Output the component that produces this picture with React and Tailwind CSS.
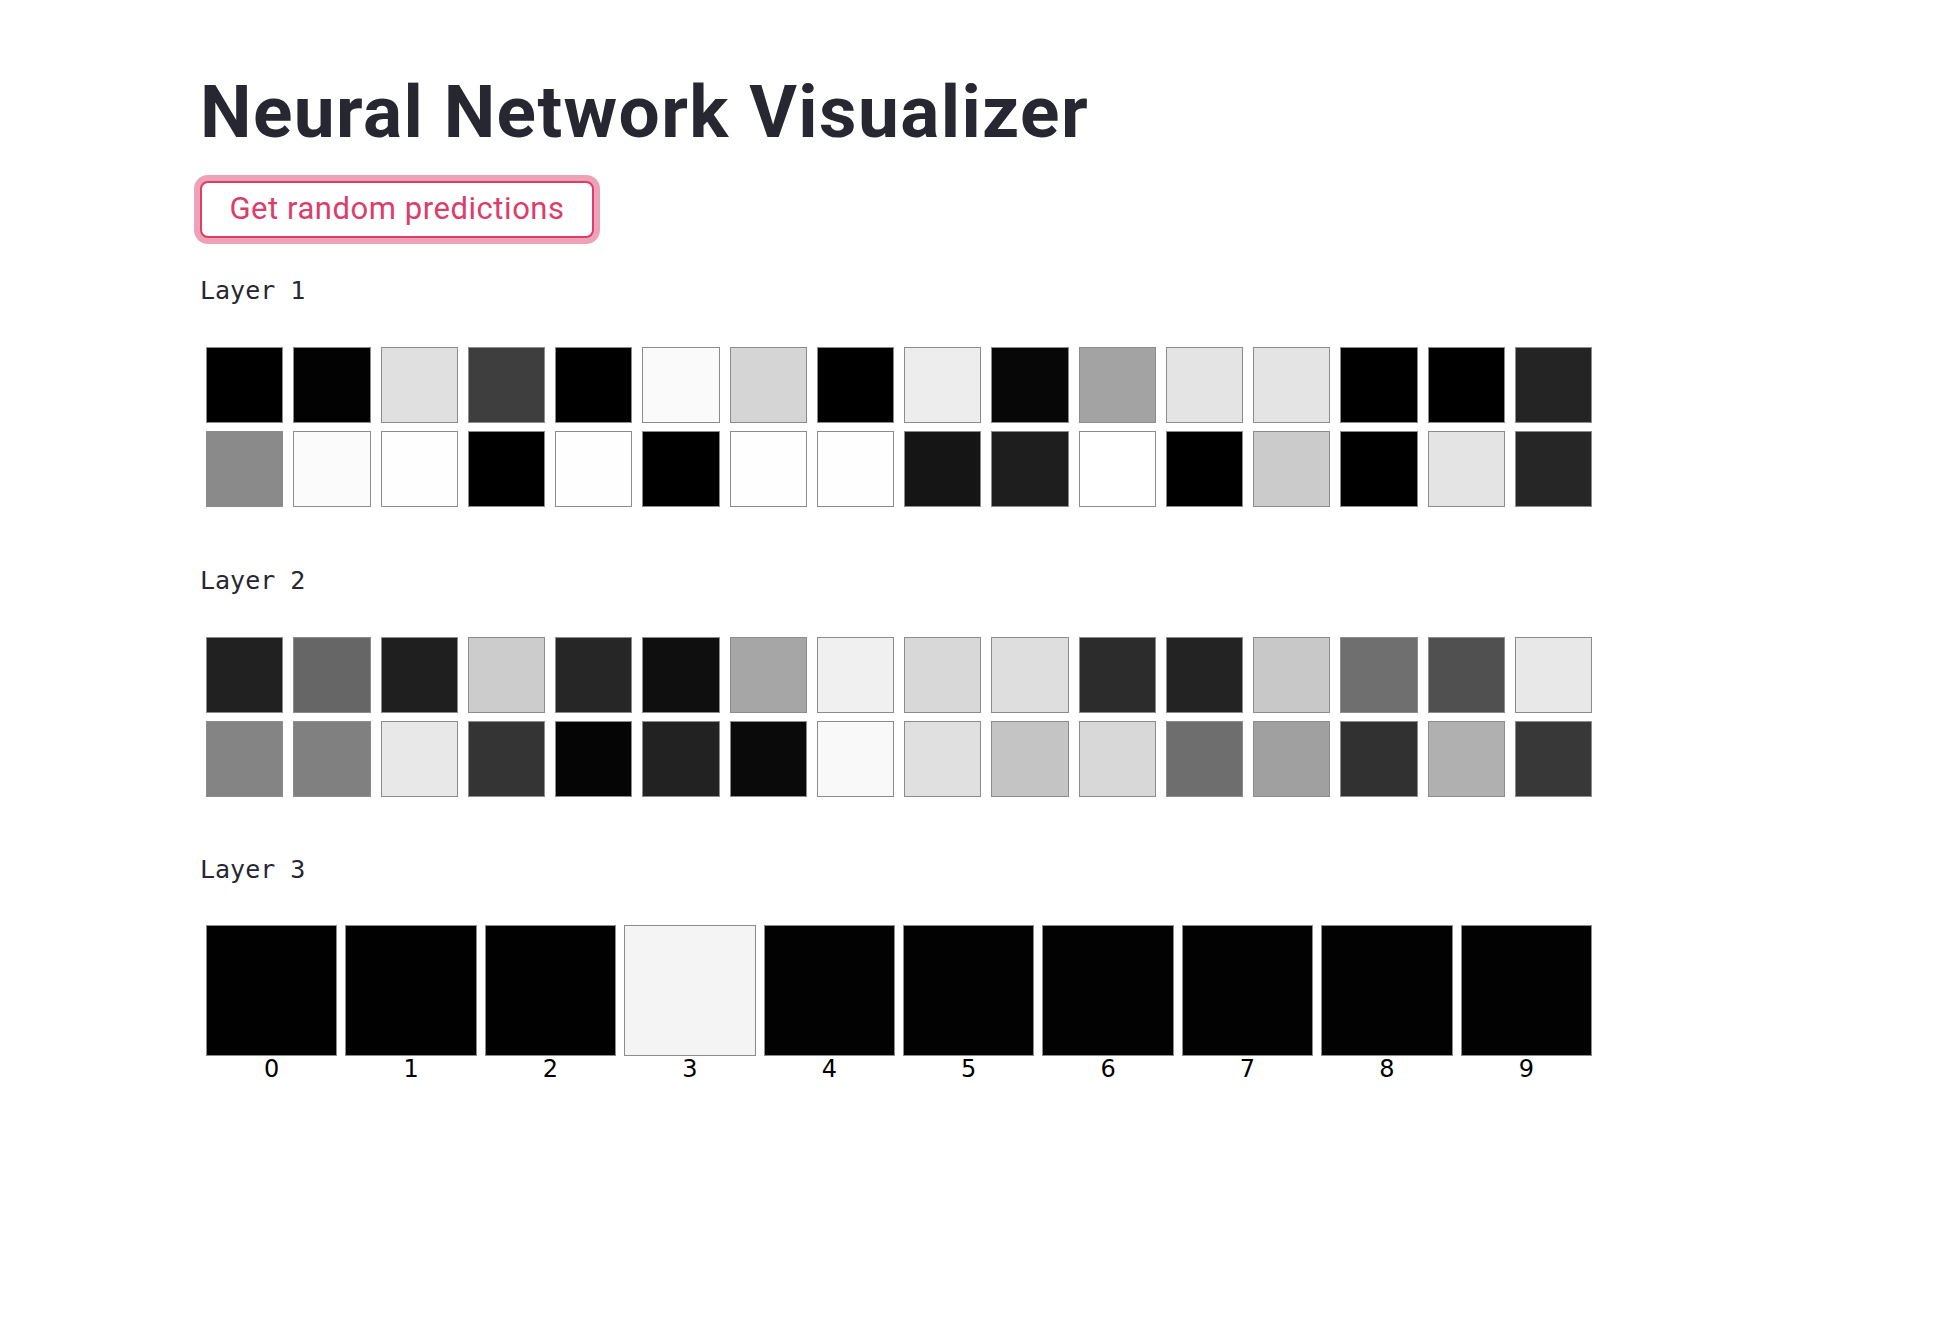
import React from "react";

// activations rendered as grey levels (0 = black, 255 = white)
const layer1 = [
  ["#000000", "#020202", "#e0e0e0", "#3e3e3e", "#000000", "#fafafa", "#d5d5d5", "#000000", "#ededed", "#070707", "#a3a3a3", "#e4e4e4", "#e4e4e4", "#000000", "#000000", "#242424"],
  ["#8a8a8a", "#fbfbfb", "#fefefe", "#000000", "#fefefe", "#000000", "#fefefe", "#fefefe", "#151515", "#1e1e1e", "#ffffff", "#000000", "#cbcbcb", "#000000", "#e4e4e4", "#262626"],
];

const layer2 = [
  ["#212121", "#666666", "#1f1f1f", "#cccccc", "#262626", "#0f0f0f", "#a6a6a6", "#f0f0f0", "#d8d8d8", "#dedede", "#2c2c2c", "#232323", "#c8c8c8", "#6f6f6f", "#505050", "#e8e8e8"],
  ["#848484", "#808080", "#e8e8e8", "#343434", "#050505", "#222222", "#0a0a0a", "#f9f9f9", "#e0e0e0", "#c4c4c4", "#d8d8d8", "#6e6e6e", "#a0a0a0", "#313131", "#b0b0b0", "#383838"],
];

const layer3 = ["#010101", "#010101", "#010101", "#f4f4f4", "#020202", "#020202", "#020202", "#020202", "#020202", "#020202"];

function LayerLabel({ children, className = "" }) {
  return (
    <div
      className={`h-[30px] text-[25px] leading-[30px] text-[#262730] ${className}`}
      style={{ fontFamily: '"DejaVu Sans Mono", "Liberation Mono", monospace' }}
    >
      {children}
    </div>
  );
}

function HiddenLayer({ rows }) {
  return (
    <div className="ml-[6px] mt-[41px] grid w-[1386px] grid-cols-16 gap-x-[10px] gap-y-[8px]">
      {rows.flat().map((c, i) => (
        <div
          key={i}
          className="h-[76px] border border-[#8c8c8c]"
          style={{ backgroundColor: c }}
        />
      ))}
    </div>
  );
}

export default function App() {
  return (
    <div className="min-h-screen bg-white pl-[200px]">
      <h1
        className="pt-[72px] h-[152px] text-[73px] leading-[80px] font-bold tracking-[1.4px] text-[#262730]"
        style={{ fontFamily: "Roboto, 'Noto Sans', sans-serif" }}
      >
        Neural Network Visualizer
      </h1>

      <button
        className="mt-[29px] flex h-[57px] w-[394px] items-center justify-center rounded-[8px] border-2 border-[#dc3d6a] bg-white text-[31px] tracking-[0.55px] text-[#dc3d6a] shadow-[0_0_0_6px_rgba(222,70,112,0.5)]"
        style={{ fontFamily: "Roboto, 'Noto Sans', sans-serif" }}
      >
        Get random predictions
      </button>

      <LayerLabel className="mt-[38px]">Layer 1</LayerLabel>
      <HiddenLayer rows={layer1} />

      <LayerLabel className="mt-[59px]">Layer 2</LayerLabel>
      <HiddenLayer rows={layer2} />

      <LayerLabel className="mt-[58px]">Layer 3</LayerLabel>
      <div className="ml-[6px] mt-[40px] grid w-[1386px] grid-cols-10 gap-x-[8px]">
        {layer3.map((c, i) => (
          <div key={i} className="flex flex-col items-center">
            <div
              className="h-[131px] w-full border border-[#8c8c8c]"
              style={{ backgroundColor: c }}
            />
            <div
              className="mt-[2px] h-[22px] text-[24px] leading-[22px] text-black"
              style={{ fontFamily: '"DejaVu Sans", sans-serif' }}
            >
              {i}
            </div>
          </div>
        ))}
      </div>
    </div>
  );
}
